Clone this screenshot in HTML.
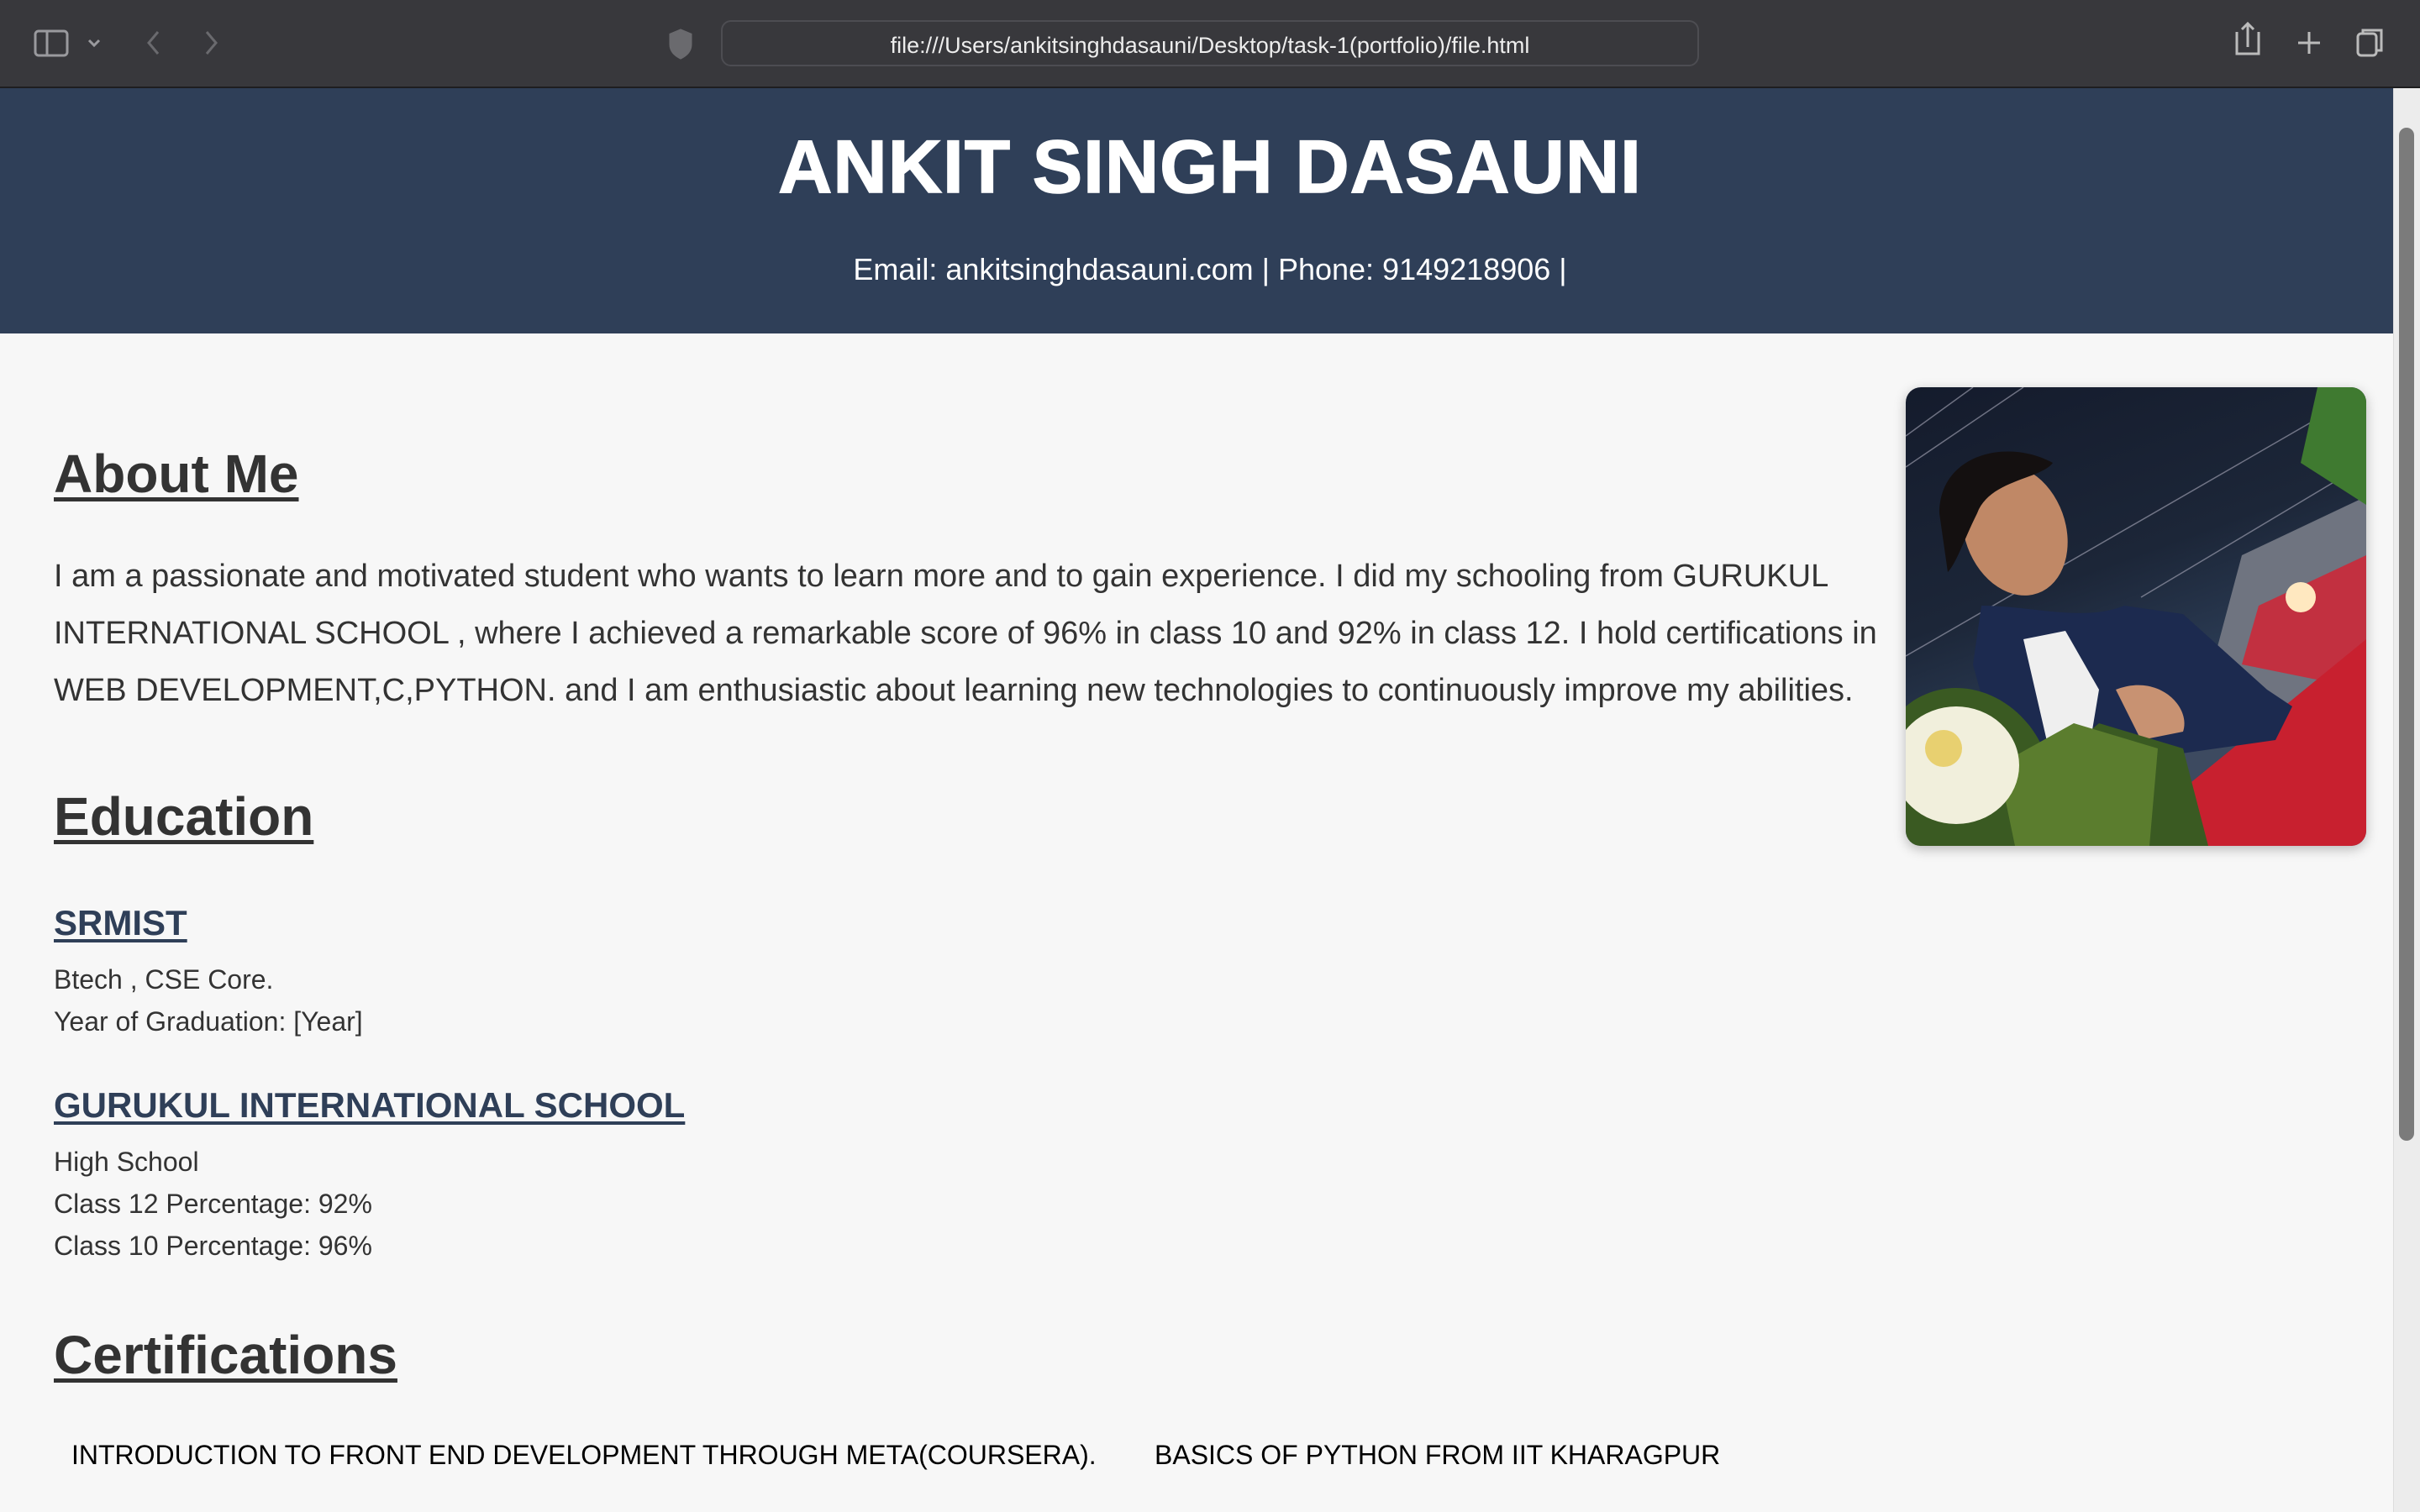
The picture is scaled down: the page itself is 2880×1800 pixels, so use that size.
<!DOCTYPE html>
<html><head><meta charset="utf-8"><style>
*{margin:0;padding:0;box-sizing:border-box}
html,body{width:2880px;height:1800px;overflow:hidden;background:#f7f7f7;font-family:"Liberation Sans",Arial,sans-serif}
.tb{position:absolute;left:0;top:0;width:2880px;height:105px;background:#38383c;border-bottom:2px solid #1e1e20}
.addr{position:absolute;left:858px;top:24px;width:1164px;height:55px;border:2px solid #4d4d52;border-radius:12px;background:#38383c}
.url{position:absolute;left:0;right:0;top:13px;text-align:center;color:#ededed;font-size:27px}
.hdr{position:absolute;left:0;top:105px;width:2880px;height:292px;background:#2f3f58;text-align:center;color:#fff}
.hdr h1{position:absolute;left:0;right:0;top:42px;font-size:89px;font-weight:900;letter-spacing:1px;-webkit-text-stroke:1.5px #fff}
.hdr p{position:absolute;left:0;right:0;top:195px;font-size:36px}
.sb{position:absolute;left:2848px;top:105px;width:32px;height:1695px;background:#ececec;border-left:1px solid #dcdcdc}
.th{position:absolute;left:6px;top:47px;width:18px;height:1206px;background:#7b7b7b;border-radius:9px}
.c{position:absolute;left:64px;color:#333}
h2{font-size:64px;font-weight:bold;text-decoration:underline;color:#333;text-decoration-thickness:5px;text-underline-offset:6px}
h3.c{font-size:42px;font-weight:bold;text-decoration:underline;color:#2f3f58;text-underline-offset:5px;text-decoration-thickness:4px}
.ab{position:absolute;left:64px;top:652px;width:2220px;font-size:38px;line-height:68px;color:#333}
.s{font-size:32px;line-height:50px;color:#333}
.cert{position:absolute;top:1714px;font-size:32px;color:#000}
.ph{position:absolute;left:2268px;top:461px;width:548px;height:546px;border-radius:18px;overflow:hidden;box-shadow:0 4px 14px rgba(0,0,0,.25);background:linear-gradient(160deg,#141b2c 0%,#1c2638 40%,#2a3a52 60%,#3d4a60 75%)}
</style></head><body>
<div class="tb">
<svg width="2880" height="105" style="position:absolute;left:0;top:0" fill="none" stroke="#9a9a9e" stroke-width="3">
<rect x="42" y="37" width="38" height="29" rx="4"/><line x1="56" y1="37" x2="56" y2="66"/>
<path d="M106 48l6 6 6-6"/><path d="M188 38l-11 13 11 13" stroke="#6a6a6e"/><path d="M246 38l11 13-11 13" stroke="#6a6a6e"/>
<path d="M810 36l-12 5v12c0 8 6 13 12 16 6-3 12-8 12-16V41z" fill="#6a6a6e" stroke="#6a6a6e"/>
<rect x="879" y="40" width="16" height="22" rx="2" stroke="#bbb"/>
<path d="M2005 42a9 9 0 1 1-4-4" stroke="#ccc"/>
<path d="M2662 38v26h26V38" stroke="#bbb"/><path d="M2675 28v28M2668 35l7-7 7 7" stroke="#bbb"/>
<path d="M2735 51h26M2748 38v26" stroke="#bbb"/>
<rect x="2806" y="40" width="22" height="26" rx="4" stroke="#bbb"/><path d="M2812 40v-4h22v24h-6" stroke="#bbb"/>
</svg>
<div class="addr"><div class="url">file:///Users/ankitsinghdasauni/Desktop/task-1(portfolio)/file.html</div></div>
</div>
<div class="hdr"><h1>ANKIT SINGH DASAUNI</h1><p>Email: ankitsinghdasauni.com | Phone: 9149218906 |</p></div>
<div class="sb"><div class="th"></div></div>

<h2 class="c" style="top:527px">About Me</h2>
<div class="ab">I am a passionate and motivated student who wants to learn more and to gain experience. I did my schooling from GURUKUL INTERNATIONAL SCHOOL , where I achieved a remarkable score of 96% in class 10 and 92% in class 12. I hold certifications in WEB DEVELOPMENT,C,PYTHON. and I am enthusiastic about learning new technologies to continuously improve my abilities.</div>

<h2 class="c" style="top:935px">Education</h2>
<h3 class="c" style="top:1075px">SRMIST</h3>
<div class="c s" style="top:1141px">Btech , CSE Core.<br>Year of Graduation: [Year]</div>
<h3 class="c" style="top:1292px">GURUKUL INTERNATIONAL SCHOOL</h3>
<div class="c s" style="top:1358px">High School<br>Class 12 Percentage: 92%<br>Class 10 Percentage: 96%</div>
<h2 class="c" style="top:1576px">Certifications</h2>
<div class="cert" style="left:85px">INTRODUCTION TO FRONT END DEVELOPMENT THROUGH META(COURSERA).</div>
<div class="cert" style="left:1374px">BASICS OF PYTHON FROM IIT KHARAGPUR</div>

<div class="ph">
<svg width="548" height="546" viewBox="0 0 548 546">
<path d="M0 58L80 0M0 95L140 0M0 320L520 20M280 250L548 90" stroke="#aab" stroke-width="1.5" opacity=".6"/>
<path d="M400 200L548 130V430L360 350Z" fill="#6f7480"/>
<path d="M420 260L548 200V360L400 330Z" fill="#c23040"/>
<circle cx="470" cy="250" r="18" fill="#ffe8c0"/>
<path d="M490 0H548V140L470 90Z" fill="#3f7a30"/>
<path d="M548 300V546H320L340 470Z" fill="#c8202f"/>
<path d="M90 260C150 260 210 280 260 260L330 270 430 360 460 380 440 420 300 440 110 440 80 330Z" fill="#1c2a4f"/>
<path d="M140 300L190 290 230 360 220 420 170 430Z" fill="#efefef"/>
<ellipse cx="130" cy="170" rx="60" ry="80" fill="#c08866" transform="rotate(-20 130 170)"/>
<path d="M40 150C40 80 120 60 175 90 160 110 100 110 85 150 70 180 60 210 50 220Z" fill="#141010"/>
<path d="M250 360C300 340 340 380 330 410L280 420Z" fill="#c89272"/>
<path d="M0 380C60 330 150 370 170 450L230 400 330 430 360 546H0Z" fill="#3a5a22"/>
<path d="M110 450L200 400 300 430 290 546H130Z" fill="#5b7d2e"/>
<ellipse cx="60" cy="450" rx="75" ry="70" fill="#f1efdc"/>
<circle cx="45" cy="430" r="22" fill="#e8d070"/>
</svg>
</div>
</body></html>
